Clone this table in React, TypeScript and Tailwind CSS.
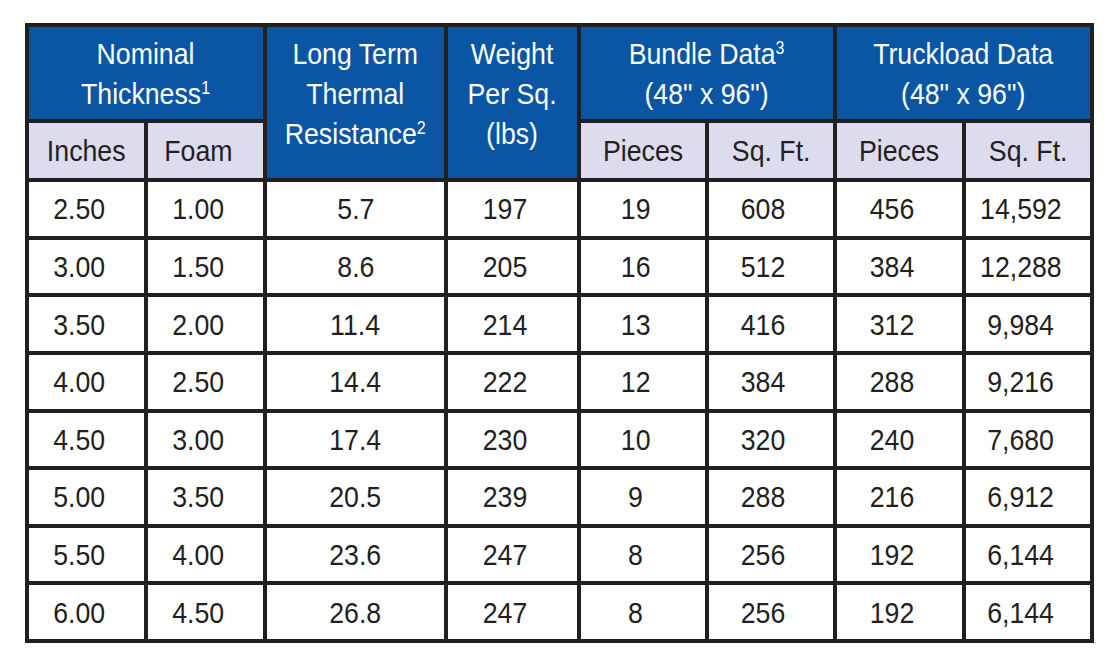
const rows: string[][] = [
  ["2.50", "1.00", "5.7", "197", "19", "608", "456", "14,592"],
  ["3.00", "1.50", "8.6", "205", "16", "512", "384", "12,288"],
  ["3.50", "2.00", "11.4", "214", "13", "416", "312", "9,984"],
  ["4.00", "2.50", "14.4", "222", "12", "384", "288", "9,216"],
  ["4.50", "3.00", "17.4", "230", "10", "320", "240", "7,680"],
  ["5.00", "3.50", "20.5", "239", "9", "288", "216", "6,912"],
  ["5.50", "4.00", "23.6", "247", "8", "256", "192", "6,144"],
  ["6.00", "4.50", "26.8", "247", "8", "256", "192", "6,144"],
];

function Sup({ n }: { n: string }) {
  return <span className="relative top-[-10px] text-[18px] leading-none">{n}</span>;
}

function Head({ children, className = "" }: { children: React.ReactNode; className?: string }) {
  return (
    <div className={`bg-[#0b55a5] text-white flex justify-center items-start pt-[7px] ${className}`}>
      <span className="inline-block scale-x-[0.89] text-center leading-[40px] whitespace-nowrap">{children}</span>
    </div>
  );
}

function Sub({ children, className = "" }: { children: React.ReactNode; className?: string }) {
  return (
    <div className={`bg-[#dcdcee] text-[#231f20] flex justify-center items-center ${className}`}>
      <span className="inline-block scale-x-[0.89] whitespace-nowrap">{children}</span>
    </div>
  );
}

export default function App() {
  return (
    <div className="w-[1119px] h-[666px] bg-white pt-[23px] pl-[25px] font-['Liberation_Sans',Arial,sans-serif] text-[30px]">
      <div className="grid w-[1069px] bg-[#231f20] p-[4px] gap-[4px] grid-cols-[115px_115px_177px_129px_124px_124px_125px_124px] grid-rows-[92px_55px_repeat(8,53.625px)]">
        <Head className="col-span-2">
          Nominal
          <br />
          Thickness<Sup n="1" />
        </Head>
        <Head className="row-span-2">
          Long Term
          <br />
          Thermal
          <br />
          Resistance<Sup n="2" />
        </Head>
        <Head className="row-span-2">
          Weight
          <br />
          Per Sq.
          <br />
          (lbs)
        </Head>
        <Head className="col-span-2">
          Bundle Data<Sup n="3" />
          <br />
          (48&quot; x 96&quot;)
        </Head>
        <Head className="col-span-2">
          Truckload Data
          <br />
          (48&quot; x 96&quot;)
        </Head>

        <Sub>Inches</Sub>
        <Sub className="pr-[15px]">Foam</Sub>
        <Sub>Pieces</Sub>
        <Sub>Sq. Ft.</Sub>
        <Sub>Pieces</Sub>
        <Sub>Sq. Ft.</Sub>

        {rows.map((r, i) =>
          r.map((v, j) => (
            <div
              key={`${i}-${j}`}
              className={`bg-white text-[#231f20] flex items-center justify-center ${j === 2 ? "" : "pr-[15px]"}`}
            >
              <span className="inline-block scale-x-[0.89]">{v}</span>
            </div>
          ))
        )}
      </div>
    </div>
  );
}
